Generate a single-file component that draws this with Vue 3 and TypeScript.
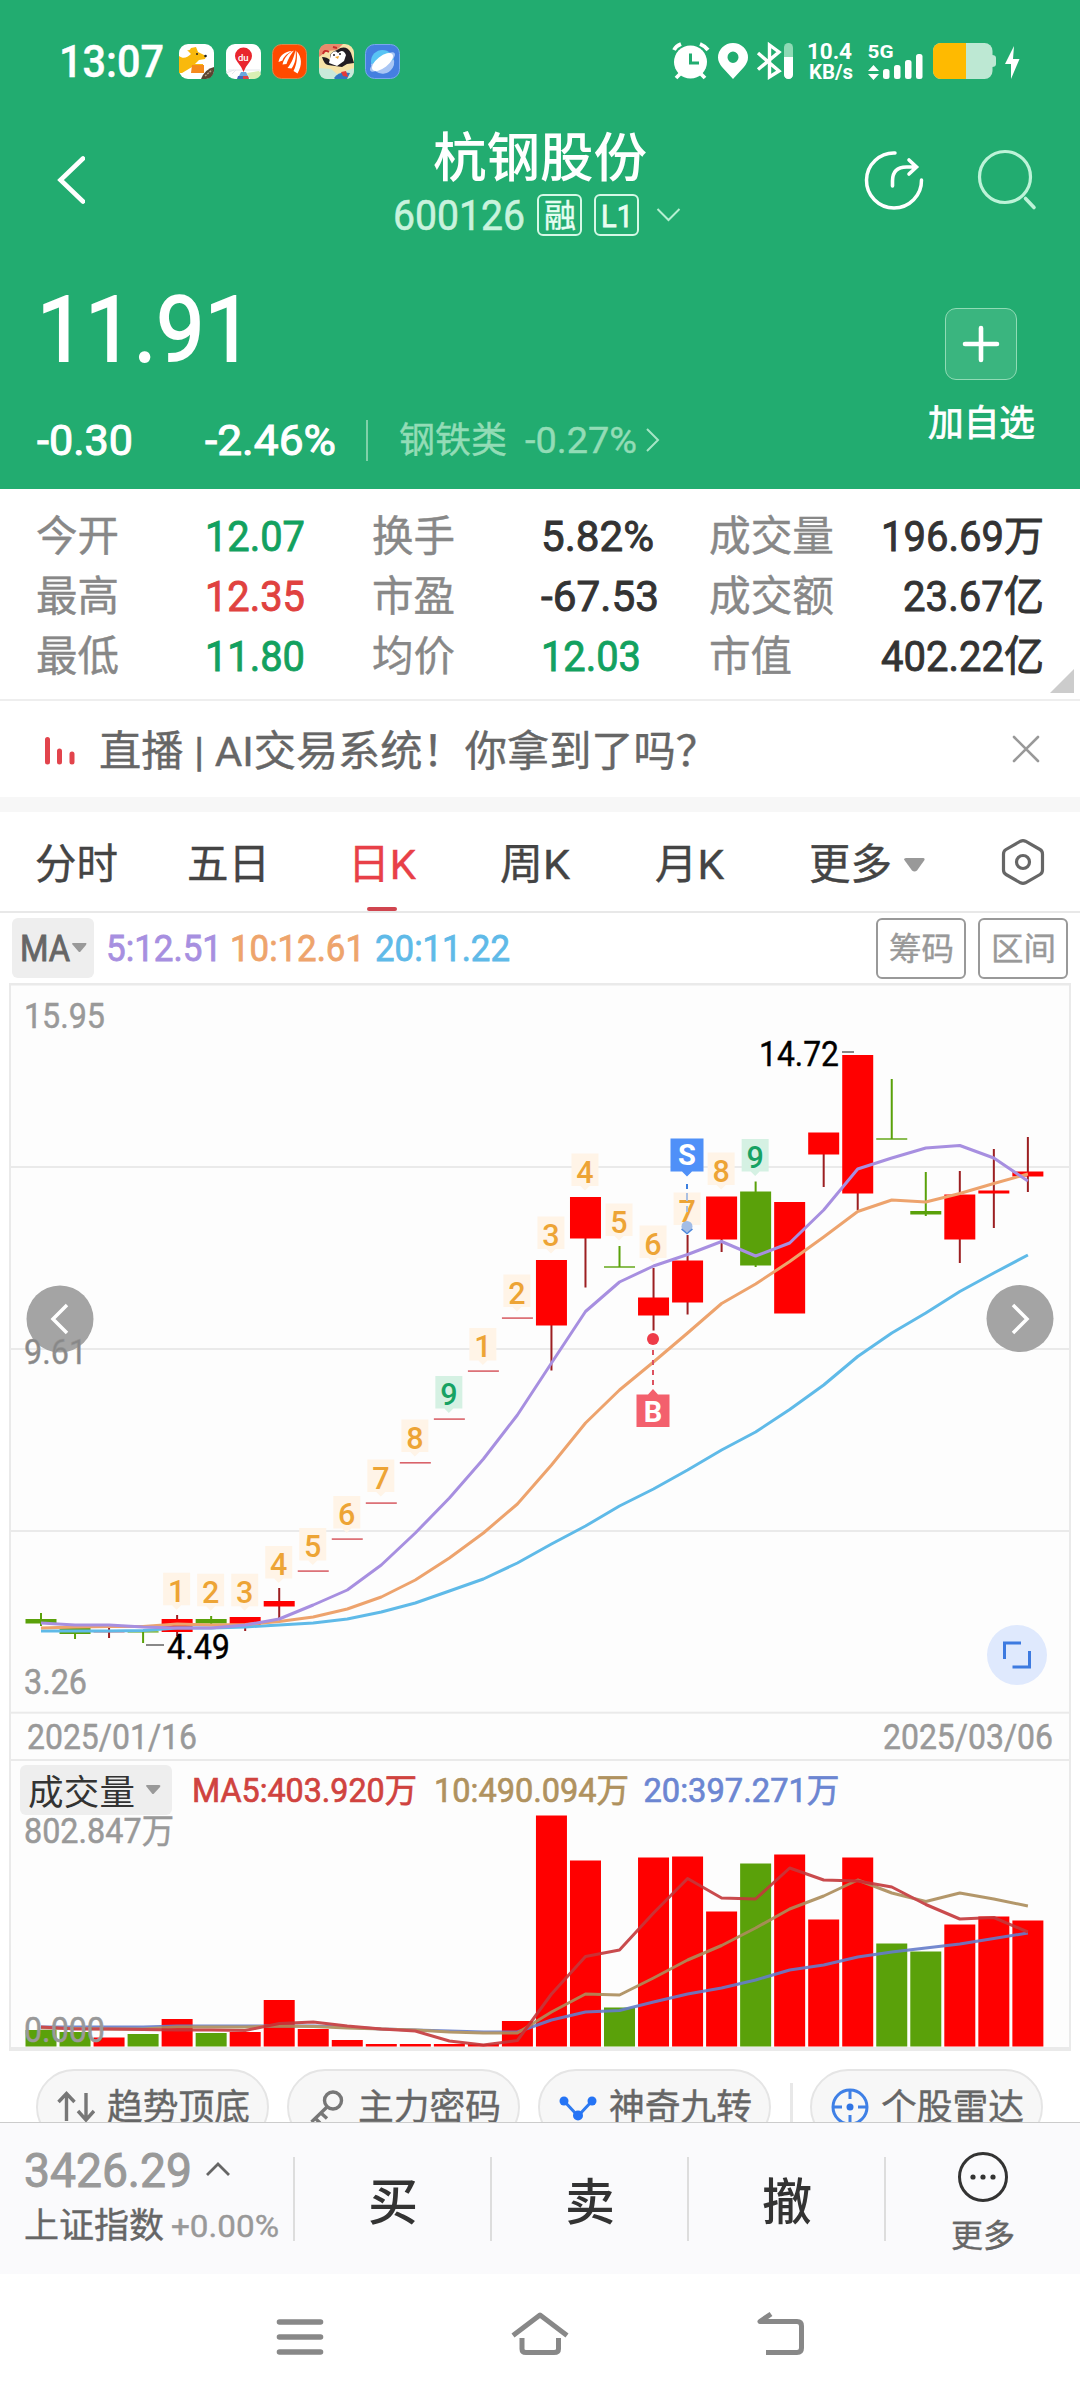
<script setup lang="ts">
import { h, type FunctionalComponent } from 'vue'

/** One line of text set to an exact advance width; its box is the cap height. */
const Fit: FunctionalComponent<{ t: string; w: number; s: number; b?: number; k?: number }> = (p) =>
  h(
    'svg',
    {
      width: p.w,
      height: Math.round(p.s * 0.71),
      style: { display: 'block', overflow: 'visible', flex: 'none' },
    },
    [
      h(
        'text',
        {
          x: 0,
          y: Math.round(p.s * 0.71),
          'font-size': p.s,
          'font-weight': p.b ?? 400,
          textLength: p.w,
          lengthAdjust: 'spacingAndGlyphs',
          fill: 'currentColor',
          stroke: 'currentColor',
          'stroke-width': p.k ?? 0.4,
        },
        p.t,
      ),
    ],
  )
Fit.props = ['t', 'w', 's', 'b', 'k']

interface Quote { label: string; lw: number; value: string; vw: number; tone: string }
const quotes: Quote[][] = [
  [
    { label: '今开', lw: 83, value: '12.07', vw: 100, tone: 'down' },
    { label: '换手', lw: 83, value: '5.82%', vw: 113, tone: '' },
    { label: '成交量', lw: 125, value: '196.69万', vw: 163, tone: '' },
  ],
  [
    { label: '最高', lw: 83, value: '12.35', vw: 100, tone: 'up' },
    { label: '市盈', lw: 83, value: '-67.53', vw: 118, tone: '' },
    { label: '成交额', lw: 125, value: '23.67亿', vw: 141, tone: '' },
  ],
  [
    { label: '最低', lw: 83, value: '11.80', vw: 100, tone: 'down' },
    { label: '均价', lw: 83, value: '12.03', vw: 100, tone: 'down' },
    { label: '市值', lw: 83, value: '402.22亿', vw: 163, tone: '' },
  ],
]

const RED = '#ff0000'
const GREEN = '#5aa10a'
const cx = (i: number) => 41 + 34.03 * i

/** [body top, body bottom, wick top, wick bottom, volume top, falling] */
const candles: [number, number, number, number, number, number][] = [
  [1619, 1623.5, 1613, 1626, 2030, 1],
  [1628, 1634, 1628, 1639, 2032, 1],
  [1631.3, 1632.5, 1627, 1638, 2037.5, 0],
  [1631.3, 1632.5, 1631, 1643, 2034, 1],
  [1619, 1632, 1615, 1636, 2019, 0],
  [1619, 1623.5, 1616, 1624, 2033, 1],
  [1617, 1626.5, 1617, 1631, 2032, 0],
  [1601, 1606.5, 1588, 1619, 2000, 0],
  [1570.3, 1571.9, 1571, 1571, 2029, 0],
  [1538.3, 1539.9, 1539, 1539, 2040, 0],
  [1502.3, 1503.9, 1503, 1503, 2044, 0],
  [1462, 1463.6, 1463, 1463, 2044, 0],
  [1418.3, 1419.9, 1419, 1419, 2044, 0],
  [1370.3, 1371.9, 1371, 1371, 2044, 0],
  [1317.3, 1318.9, 1318, 1318, 2021, 0],
  [1260, 1325.5, 1260, 1370.5, 1815.5, 0],
  [1197, 1238.5, 1197, 1287.5, 1860.5, 0],
  [1266.3, 1267.7, 1246, 1267, 2007.5, 1],
  [1297.5, 1315.5, 1268, 1330.5, 1857.5, 0],
  [1260.5, 1302.5, 1235, 1314.5, 1856.5, 0],
  [1196.5, 1239.5, 1197, 1252, 1911.5, 0],
  [1191.5, 1265.5, 1181.5, 1267, 1863.5, 1],
  [1202, 1313.5, 1202, 1313, 1854.5, 0],
  [1132.5, 1154.5, 1133, 1187, 1919.5, 0],
  [1055, 1193.5, 1055, 1210, 1857.5, 0],
  [1138.3, 1139.7, 1079, 1139, 1943.5, 1],
  [1211, 1214.5, 1172, 1216, 1951.5, 1],
  [1194.5, 1239.5, 1171, 1263, 1924.5, 0],
  [1190.5, 1193.5, 1149, 1228, 1916.5, 0],
  [1171.5, 1176.5, 1137, 1192, 1920.5, 0],
]

const path = (ys: number[]) => ys.map((y, i) => `${cx(i).toFixed(1)},${y}`).join(' ')
const ma5 = path([1623, 1625, 1625, 1627, 1628, 1628, 1625, 1619, 1605, 1590, 1565, 1533, 1498, 1459, 1415, 1363, 1311.5, 1282, 1266, 1254.5, 1241.5, 1256, 1243, 1210, 1169, 1158, 1148, 1145.5, 1158, 1181])
const ma10 = path([1628, 1627, 1626.5, 1626.5, 1624, 1625, 1624.5, 1621.5, 1617, 1609, 1597, 1580, 1558, 1533, 1504, 1465, 1423, 1390, 1362, 1333, 1303.5, 1284, 1261.5, 1237, 1211.5, 1200, 1202, 1193.5, 1183.5, 1174])
const ma20 = path([1631, 1631, 1631, 1630.5, 1628, 1628, 1627, 1625, 1623, 1619, 1612, 1603, 1591, 1579, 1563, 1544, 1526, 1506, 1489, 1470, 1450, 1432, 1409.5, 1385, 1356.5, 1333, 1313, 1291.5, 1273, 1255])
const vma5 = path([2027, 2029, 2029, 2029.5, 2030, 2030, 2030.5, 2023.5, 2022, 2026, 2029, 2031, 2041, 2045, 2040.5, 1994, 1956.5, 1950, 1913, 1878.5, 1898, 1899, 1868, 1880, 1881, 1887, 1904.5, 1919, 1917.5, 1932])
const vma10 = path([2028, 2028.5, 2029, 2029, 2027, 2027, 2027, 2026, 2026.5, 2028, 2029, 2030, 2032, 2033, 2033, 2012, 1994, 1995, 1978, 1960, 1945.5, 1928, 1909, 1896, 1880, 1893, 1901.5, 1893, 1899, 1906])
const vma20 = path([2027, 2027, 2027, 2027, 2026, 2026, 2026, 2026, 2026, 2027, 2029, 2030, 2031, 2032, 2032, 2020, 2012, 2010.5, 2002, 1994, 1988, 1980, 1970, 1965, 1957, 1952, 1948, 1944, 1938.5, 1933])

/** Nine-turn tags: [candle index, count, top edge] */
const tags: [number, string, number][] = [
  [4, '1', 1572.7], [5, '2', 1573.7], [6, '3', 1573.7], [7, '4', 1546], [8, '5', 1528],
  [9, '6', 1496], [10, '7', 1459.5], [11, '8', 1419.5], [12, '9', 1376], [13, '1', 1328],
  [14, '2', 1274.5], [15, '3', 1216.5], [16, '4', 1153.5], [17, '5', 1203.5], [18, '6', 1225.5],
  [19, '7', 1192.5], [20, '8', 1152.5], [21, '9', 1139],
]
const gridLines = [1167, 1349, 1531, 1712.7, 1760]
</script>

<template>
  <div class="page">
    <header class="top">
      <div class="status">
        <Fit class="clock" t="13:07" :w="105" :s="43.500" :b="500" />
        <svg class="app" viewBox="0 0 35 35">
          <rect width="35" height="35" rx="9" fill="#fff" />
          <path d="M0 12C4 15 8 14 12 10L8 6Q11 7 12 4L17 3L19 8L27 12L26 15L20 16L16 20H24V22L13 23L3 29H0Z" fill="#f9b90c" />
          <path d="M13 21H25V29H12Z" fill="#f58a1c" />
          <circle cx="18" cy="10" r="1" fill="#222" /><circle cx="26.500" cy="12" r="1.300" fill="#222" />
          <path d="M22 35Q26 25 35 23V27Q34 34 27 35Z" fill="#5b4431" /><path d="M26 32L33 26" stroke="#b9a08a" stroke-width="1.500" stroke-dasharray="2 1" />
        </svg>
        <svg class="app" viewBox="0 0 35 35">
          <rect width="35" height="35" rx="9" fill="#fff" />
          <path d="M2 26H34M6 30L10 26M0 29L8 26" stroke="#e5e8ec" fill="none" /><path d="M24 35L21 29L33 27L35 30Q33 35 27 35Z" fill="#d9efb4" />
          <path d="M12 34L15 28H20L23 34Z" fill="#6aa8de" /><path d="M11 35L12 32H17V35Z" fill="#4166b8" /><path d="M17 35V32H22L23 35Z" fill="#d44" />
          <path d="M17.500 28Q15 22 11.500 18A8.500 8.500 0 1 1 23.500 18Q20 22 17.500 28Z" fill="#e9262d" />
          <text x="12" y="17" font-size="9.500" font-weight="500" fill="#fff">du</text>
        </svg>
        <svg class="app" viewBox="0 0 35 35">
          <rect x=".5" y=".5" width="34" height="34" rx="9" fill="#ff4a00" stroke="#d58a4e" />
          <path d="M6.500 18C7.500 11.500 13 7.500 20 7C14 10.500 11.500 13 10.500 16.500ZM10.500 20.500C12.500 13 16.500 9 22 6.500C18 11.500 16.500 14.500 14.500 20ZM15.500 24C20 18.500 22 13 23.500 6C24.500 13 23.500 19 19.500 24.500ZM21.500 27C25 20 25.500 13 24.500 7C30 13 30.500 21 25.500 29.500Z" fill="#fff" />
        </svg>
        <svg class="app" viewBox="0 0 35 35">
          <rect width="35" height="35" rx="9" fill="#f6e3a8" />
          <path d="M0 9Q0 0 9 0H24L18 6L8 7L0 13Z" fill="#e98a6c" /><path d="M4 10Q5 5 10 8M14 3L18 4" stroke="#c92d2b" stroke-width="2" fill="none" />
          <path d="M3 13Q8 13 11 16Q10 8 18 6Q27 0 32 9L35 19L28 20L23 23L9 21Q5 20 3 13Z" fill="#211d22" />
          <path d="M12 10Q16 5 19 9Q24 4 27 11L25 17L18 22L10 19Z" fill="#fff" />
          <circle cx="15" cy="11" r="1" fill="#222" /><circle cx="21" cy="10" r="1" fill="#222" /><path d="M16 13L20 12L19 15Z" fill="#f0a426" />
          <path d="M0 24L12 25L18 30L35 24V26Q35 35 26 35H9Q0 35 0 26Z" fill="#c9e9da" /><path d="M15 34Q20 27 31 29L28 35H16Z" fill="#3077c1" /><path d="M22 28L27 27L29 33L24 32Z" fill="#e33a3a" />
        </svg>
        <svg class="app" viewBox="0 0 35 35">
          <rect x=".5" y=".5" width="34" height="34" rx="9" fill="#447fe0" stroke="#79a7ee" />
          <circle cx="17.500" cy="17.500" r="11.500" fill="#59c4f4" /><path d="M6 20A11.500 11.500 0 0 0 29 16Z" fill="#a9c6f4" />
          <ellipse cx="17.500" cy="18" rx="15" ry="5" transform="rotate(-36 17.500 18)" fill="#a9c6f4" />
          <ellipse cx="17.500" cy="18" rx="12.500" ry="5.800" transform="rotate(-38 17.500 18)" fill="#fff" />
        </svg>
        <svg class="sys" width="350" height="40" viewBox="671 41 350 40" fill="#fff">
          <circle cx="690.500" cy="62" r="16.500" />
          <path d="M674 50Q676 46 681 44M700 44Q705 46 708 50M681 73L676 78M700 73L705 78" stroke="#fff" stroke-width="3.800" fill="none" />
          <path d="M690.500 53.500V63H699" stroke="#22ac70" stroke-width="3" fill="none" />
          <path fill-rule="evenodd" d="M733 79L722 67Q718 62 718 57.500A15 14.500 0 0 1 748 57.500Q748 62 744 67ZM733 51.500A5.500 5.700 0 1 0 733 62.900A5.500 5.700 0 0 0 733 51.500Z" />
          <path d="M758 53L779 71L769.500 77V45L779 52L758 69.500" fill="none" stroke="#fff" stroke-width="3.400" />
          <rect x="784" y="43" width="9" height="36" rx="4.500" fill="#8fdab5" /><path d="M784 57H793V74.500A4.500 4.500 0 0 1 784 74.500Z" />
          <text x="807" y="59" font-size="22.500" font-weight="700" textLength="45">10.4</text>
          <text x="809" y="78.500" font-size="19.500" font-weight="700" textLength="44" lengthAdjust="spacingAndGlyphs">KB/s</text>
          <text x="867.500" y="57.500" font-size="18.500" font-weight="700" textLength="26" lengthAdjust="spacingAndGlyphs">5G</text>
          <path d="M868 71L873.500 65L879 71ZM868 74L873.500 80L879 74Z" />
          <rect x="883" y="69" width="6.500" height="10" rx="2.500" /><rect x="894" y="65" width="6.500" height="14" rx="2.500" />
          <rect x="905" y="60" width="6.500" height="19" rx="2.500" /><rect x="916" y="54" width="6.500" height="25" rx="2.500" />
          <rect x="933" y="43" width="59.500" height="36" rx="8" fill="#bde8d3" /><path d="M992 55Q996 55 996 58V64Q996 67 992 67Z" fill="#bde8d3" />
          <path d="M966 43H941A8 8 0 0 0 933 51V71A8 8 0 0 0 941 79H966Z" fill="#ffba00" />
          <path d="M1014 46L1005 64H1011L1011 79L1019.500 59H1013Z" />
        </svg>
      </div>

      <div class="nav">
        <svg class="back" width="28" height="50" viewBox="57 155 28 50"><path d="M83 158.500L60.500 180L83 201.500" fill="none" stroke="#fff" stroke-width="4.600" stroke-linecap="round" /></svg>
        <div class="title">
          <Fit class="name" t="杭钢股份" :w="214" :s="53" :b="500" :k="0" />
          <div class="code">
            <Fit t="600126" :w="132" :s="42.500" :k="0.6" />
            <span class="badge b1"><Fit t="融" :w="32" :s="32" /></span>
            <span class="badge b2"><Fit t="L1" :w="32" :s="32" :k="0.8" /></span>
            <svg class="chev" width="25" height="14" viewBox="0 0 25 14"><path d="M1.500 1L12.500 12L23.500 1" fill="none" stroke="#b5f0d2" stroke-width="2" /></svg>
          </div>
        </div>
        <svg class="acts" width="174" height="64" viewBox="863 148 174 64" fill="none" stroke-linecap="round">
          <path d="M895 153A27.500 27.500 0 1 0 921.500 180" stroke="#fff" stroke-width="3.500" />
          <path d="M892.500 186V181Q892.500 167 906.500 167H916M909 160L916.500 167L909 174" stroke="#fff" stroke-width="3.600" />
          <circle cx="1005" cy="177" r="25.500" stroke="#bdf3d8" stroke-width="3.200" /><path d="M1025.500 198.500L1034 207.500" stroke="#bdf3d8" stroke-width="3.600" />
        </svg>
      </div>

      <div class="pricing">
        <div class="left">
          <Fit t="11.91" :w="216" :s="90" :k="1.8" />
          <div class="change">
            <Fit t="-0.30" :w="96" :s="42.500" :k="1" />
            <Fit class="pct" t="-2.46%" :w="131" :s="42.500" :k="1" />
            <i class="bar" />
            <Fit class="sector" t="钢铁类" :w="108" :s="36" />
            <Fit class="sector2" t="-0.27%" :w="112" :s="37" />
            <svg class="go" width="14" height="24" viewBox="0 0 14 24"><path d="M1 1L12 12L1 23" fill="none" stroke="#a5e6c6" stroke-width="2" /></svg>
          </div>
        </div>
        <div class="fav">
          <span class="plus"><svg width="38" height="38"><path d="M19 3V35M3 19H35" stroke="#fff" stroke-width="4.600" stroke-linecap="round" /></svg></span>
          <Fit t="加自选" :w="107" :s="36" :k="0.8" />
        </div>
      </div>
    </header>

    <section class="quotes">
      <div v-for="(row, r) in quotes" :key="r" class="row">
        <div v-for="(q, c) in row" :key="q.label" :class="['cell', { last: c === 2 }]">
          <Fit class="label" :t="q.label" :w="q.lw" :s="41.500" />
          <Fit :class="['value', q.tone]" :t="q.value" :w="q.vw" :s="42" :k="0.9" />
        </div>
      </div>
      <i class="corner" />
    </section>

    <section class="live">
      <svg class="live-icon" width="30" height="28" viewBox="0 0 30 28"><path d="M2.500 2.500V25M14.500 14V25M27 17V25" stroke="#e2444c" stroke-width="5" stroke-linecap="round" /></svg>
      <Fit class="live-text" t="直播 | AI交易系统！你拿到了吗？" :w="619" :s="41.500" />
      <svg class="close" width="28" height="28"><path d="M2 2L26 26M26 2L2 26" stroke="#999" stroke-width="2.600" stroke-linecap="round" /></svg>
    </section>

    <nav class="tabs">
      <span class="tab"><Fit t="分时" :w="83" :s="41.500" /></span>
      <span class="tab"><Fit t="五日" :w="83" :s="41.500" /></span>
      <span class="tab on"><Fit t="日K" :w="68" :s="41.500" /></span>
      <span class="tab"><Fit t="周K" :w="70" :s="41.500" /></span>
      <span class="tab"><Fit t="月K" :w="69" :s="41.500" /></span>
      <span class="tab more"><Fit t="更多" :w="83" :s="41.500" />
        <svg width="21" height="14"><path d="M0 1.500Q0 0 2 0H19Q21 0 20.500 2L13 12.500Q10.500 14.500 8 12.500Z" fill="#999" /></svg></span>
      <svg class="gear" width="44" height="50" viewBox="1001 837 44 50" fill="none" stroke="#666" stroke-width="3.200">
        <path d="M1020.500 841.200Q1023 840 1025.500 841.200L1040 849.500Q1042.500 851 1042.500 854V870Q1042.500 873 1040 874.500L1025.500 882.800Q1023 884 1020.500 882.800L1006 874.500Q1003.500 873 1003.500 870V854Q1003.500 851 1006 849.500Z" />
        <circle cx="1023" cy="862" r="6.500" />
      </svg>
    </nav>

    <section class="mas">
      <span class="sel"><Fit t="MA" :w="50" :s="36" :k="0.9" />
        <svg width="15" height="10"><path d="M0 1Q0 0 1 0H14Q15 0 14 2L8.500 8.500Q7.500 9.500 6.500 8.500Z" fill="#999" /></svg></span>
      <Fit class="m5" t="5:12.51" :w="116" :s="36" :k="0.8" />
      <Fit class="m10" t="10:12.61" :w="135" :s="36" :k="0.8" />
      <Fit class="m20" t="20:11.22" :w="135" :s="36" :k="0.8" />
      <span class="btn"><Fit t="筹码" :w="65" :s="32" /></span>
      <span class="btn"><Fit t="区间" :w="65" :s="32" /></span>
    </section>

    <svg class="chart" width="1080" height="1069" viewBox="0 983 1080 1069">
      <rect x="10" y="984.500" width="1060" height="1065" fill="#fdfdfd" />
      <g fill="#eaeaea">
        <rect x="9" y="983" width="1062" height="2.500" /><rect x="9" y="983" width="2" height="1067" />
        <rect x="1069" y="983" width="2" height="1067" /><rect x="9" y="2047" width="1062" height="4" />
        <rect v-for="y in gridLines" :key="y" x="10" :y="y - 1" width="1060" height="2" />
      </g>

      <template v-for="(c, i) in candles" :key="i">
        <rect v-if="c[3] > c[2]" :x="cx(i) - 1" :y="c[2]" width="2" :height="c[3] - c[2]" :fill="c[5] ? GREEN : '#9c1f22'" />
        <rect :x="cx(i) - 15.500" :y="c[0]" width="31" :height="c[1] - c[0]" :fill="c[5] ? GREEN : c[1] - c[0] < 2 ? '#d9636a' : RED" />
        <rect :x="cx(i) - 15.500" :y="c[4]" width="31" :height="2046.500 - c[4]" :fill="c[5] ? GREEN : RED" />
      </template>

      <g fill="none" stroke-width="3" stroke-linejoin="round">
        <polyline :points="ma20" stroke="#5fbae8" /><polyline :points="ma10" stroke="#eda36d" /><polyline :points="ma5" stroke="#a78fe0" />
        <g opacity=".9"><polyline :points="vma20" stroke="#667dcb" /><polyline :points="vma10" stroke="#ac8d5b" /><polyline :points="vma5" stroke="#c4383b" /></g>
      </g>

      <g v-for="t in tags" :key="t[0]">
        <path :transform="`translate(${cx(t[0]) - 0.5} ${t[2]})`" d="M-13.500 0H13.500V32.500H4.500L0 37L-4.500 32.500H-13.500Z" :fill="t[1] === '9' ? '#d5f1e3' : '#fff4e7'" />
        <text :x="cx(t[0]) - 0.5" :y="t[2] + 29" text-anchor="middle" font-size="30.500" font-weight="500" :fill="t[1] === '9' ? '#17a263' : '#eda435'">{{ t[1] }}</text>
      </g>

      <path d="M670.500 1138.500H703.500V1171.500H692L687 1176.500L682 1171.500H670.500Z" fill="#4f90f8" />
      <text x="687" y="1165" text-anchor="middle" font-size="29" font-weight="700" fill="#fff">S</text>
      <path d="M687 1184V1189" stroke="#3c7fdf" stroke-width="2" /><path d="M687 1193V1201M687 1206V1212" stroke="#a9bfe2" stroke-width="2" />
      <circle cx="687" cy="1226.500" r="5.500" fill="#a3bde6" /><path d="M681.500 1229L687 1233.500L692.500 1229" fill="none" stroke="#4b87dc" stroke-width="1.500" />
      <path d="M636.500 1394.500H648L653 1389L658 1394.500H669.500V1427H636.500Z" fill="#f3606d" />
      <text x="653" y="1421.500" text-anchor="middle" font-size="29" font-weight="700" fill="#fff">B</text>
      <circle cx="653" cy="1339" r="6" fill="#ee3b48" /><path d="M653 1350V1386" stroke="#dc5260" stroke-width="2" stroke-dasharray="5 5" />

      <path d="M146 1645H164" stroke="#888" stroke-width="2" /><path d="M842 1052H854" stroke="#888" stroke-width="2" />
      <g fill="#000" stroke="#000" stroke-width=".4" font-size="34.500">
        <text x="167" y="1658.500" textLength="63" lengthAdjust="spacingAndGlyphs">4.49</text>
        <text x="759" y="1066" textLength="80" lengthAdjust="spacingAndGlyphs">14.72</text>
      </g>

      <circle cx="60" cy="1319" r="33.500" fill="#a4a4a4" /><path d="M67 1305L53 1319L67 1333" fill="none" stroke="#fff" stroke-width="3.500" />
      <circle cx="1020" cy="1318.500" r="33.500" fill="#a4a4a4" /><path d="M1013 1305L1027 1319L1013 1333" fill="none" stroke="#fff" stroke-width="3.500" />
      <circle cx="1017" cy="1655" r="30" fill="#dfe9fd" /><path d="M1004.500 1659V1643H1021M1029.500 1651V1667H1012.500" fill="none" stroke="#3d7ae0" stroke-width="3" />

      <g fill="#999" stroke="#999" stroke-width=".5" font-size="34.500">
        <text x="24" y="1028" textLength="81" lengthAdjust="spacingAndGlyphs">15.95</text>
        <text x="24" y="1364" textLength="63" lengthAdjust="spacingAndGlyphs" fill="#888">9.61</text>
        <text x="24" y="1693.500" textLength="63" lengthAdjust="spacingAndGlyphs">3.26</text>
        <text x="27" y="1749" textLength="170" lengthAdjust="spacingAndGlyphs">2025/01/16</text>
        <text x="883" y="1749" textLength="170" lengthAdjust="spacingAndGlyphs">2025/03/06</text>
        <text x="24" y="1842.500" textLength="150" lengthAdjust="spacingAndGlyphs">802.847万</text>
        <text x="24" y="2041.500" textLength="81" lengthAdjust="spacingAndGlyphs">0.000</text>
      </g>

      <rect x="20" y="1765" width="152" height="50" rx="6" fill="#eee" />
      <text x="28" y="1804.500" font-size="35.500" textLength="107" fill="#333">成交量</text>
      <path d="M146 1786Q146 1785 147 1785H159Q161 1785 160 1787L154 1793.500Q153 1794.500 152 1793.500Z" fill="#999" />
      <g font-size="33.500" stroke-width=".7">
        <text x="192" y="1802" textLength="225" lengthAdjust="spacingAndGlyphs" fill="#d0433f" stroke="#d0433f">MA5:403.920万</text>
        <text x="434" y="1802" textLength="195" lengthAdjust="spacingAndGlyphs" fill="#b0925f" stroke="#b0925f">10:490.094万</text>
        <text x="643.500" y="1802" textLength="196" lengthAdjust="spacingAndGlyphs" fill="#6c86d2" stroke="#6c86d2">20:397.271万</text>
      </g>
    </svg>

    <section class="pills">
      <span class="pill">
        <svg class="pi" width="38" height="34" viewBox="57 2089 38 34"><path d="M66.500 2120V2093M58.500 2101L66.500 2092.500L74.500 2101M86 2092V2119M78 2110L86 2119L94 2110" fill="none" stroke="#777" stroke-width="3.400" /></svg>
        <Fit t="趋势顶底" :w="143" :s="36" />
      </span>
      <span class="pill">
        <svg class="pi" width="38" height="36" viewBox="310 2087 38 36"><g fill="none" stroke="#777" stroke-width="3.400"><circle cx="335" cy="2098.500" r="8.500" /><path d="M329 2105L313.500 2120M323 2111L329 2116.500M317 2116L322 2121" /></g></svg>
        <Fit t="主力密码" :w="143" :s="36" />
      </span>
      <span class="pill">
        <svg class="pi" width="38" height="36" viewBox="559 2087 38 36"><path d="M564 2099L578 2114L592 2099" fill="none" stroke="#2f7bf0" stroke-width="3" /><g fill="#2574f5"><circle cx="564" cy="2099" r="4.500" /><circle cx="592" cy="2099" r="4.500" /><circle cx="578" cy="2113.500" r="5" /></g></svg>
        <Fit t="神奇九转" :w="143" :s="36" />
      </span>
      <i class="split" />
      <span class="pill">
        <svg class="pi" width="38" height="38" viewBox="831 2088 38 38"><g fill="none" stroke="#3f80e6" stroke-width="3"><circle cx="850" cy="2107" r="17" /><path d="M850 2090V2099M850 2115V2124M833 2107H842M858 2107H867" /></g><circle cx="850" cy="2107" r="3.500" fill="#2f74e4" /></svg>
        <Fit t="个股雷达" :w="143" :s="36" />
      </span>
    </section>

    <footer class="trade">
      <div class="index">
        <div class="line1"><Fit t="3426.29" :w="168" :s="49" :k="1" /><svg width="26" height="15"><path d="M2 13L13 2L24 13" fill="none" stroke="#666" stroke-width="2.800" /></svg></div>
        <div class="line2"><Fit t="上证指数" :w="140" :s="35" /><Fit class="chg" t="+0.00%" :w="108" :s="31.500" /></div>
      </div>
      <div class="act"><Fit t="买" :w="50" :s="50" :b="500" :k="0" /></div>
      <div class="act"><Fit t="卖" :w="50" :s="50" :b="500" :k="0" /></div>
      <div class="act"><Fit t="撤" :w="50" :s="50" :b="500" :k="0" /></div>
      <div class="act etc">
        <svg class="dots" width="52" height="52"><circle cx="26" cy="26" r="23.500" fill="none" stroke="#333" stroke-width="3" /><g fill="#333"><circle cx="16" cy="26" r="2.600" /><circle cx="26" cy="26" r="2.600" /><circle cx="36" cy="26" r="2.600" /></g></svg>
        <Fit t="更多" :w="64" :s="32" />
      </div>
    </footer>

    <div class="sysnav">
      <svg width="1080" height="60" viewBox="0 2305 1080 60" fill="none" stroke="#888" stroke-width="5" stroke-linejoin="round">
        <path d="M279.500 2322H320.500M279.500 2337H320.500M279.500 2352H320.500" stroke-width="5.600" stroke-linecap="round" />
        <path d="M513 2335.500L540 2315L567 2335.500M522 2338V2349Q522 2352.500 526 2352.500H554Q558.500 2352.500 558.500 2349V2338" />
        <path d="M771 2314L760 2321.500H797Q801.500 2321.500 801.500 2326V2348Q801.500 2352.500 797 2352.500H766" />
      </svg>
    </div>
  </div>
</template>

<style>
body { margin: 0; background: #fff; }
</style>

<style scoped>
.page { width: 1080px; height: 2400px; overflow: hidden; display: flex; flex-direction: column; background: #fff; font-family: Roboto, "Noto Sans CJK SC", sans-serif; }
.page > * { flex: none; box-sizing: border-box; }
.top { height: 489px; background: #22ac70; color: #fff; overflow: hidden; }
.status { display: flex; align-items: center; height: 122px; padding-left: 59px; }
.app { width: 35px; height: 35px; margin-right: 11.600px; flex: none; }
.clock { margin-right: 15px; }
.sys { margin-left: 258.800px; flex: none; overflow: visible; }
.nav { display: flex; height: 123px; align-items: flex-start; }
.back { margin: 33px 0 0 57px; flex: none; }
.title { width: 780px; padding-top: 17px; }
.name { margin: 0 0 0 348px; }
.code { display: flex; align-items: center; height: 42px; margin: 17px 0 0 308px; color: #c8f3dd; }
.badge { display: flex; align-items: center; justify-content: center; width: 45px; height: 42px; box-sizing: border-box; border: 2px solid #d5f8e6; border-radius: 6px; color: #e6fdf1; }
.b1 { margin-left: 12px; }
.b2 { margin-left: 12px; }
.chev { margin-left: 17px; }
.acts { margin-top: 26px; margin-left: -2px; flex: none; }
.pricing { display: flex; height: 244px; }
.left { width: 926px; padding: 52px 0 0 37px; box-sizing: border-box; }
.change { display: flex; align-items: center; height: 42px; margin-top: 58px; }
.pct { margin-left: 72px; }
.bar { width: 2px; height: 41px; background: #7fd1a9; margin-left: 30px; }
.sector { margin-left: 31px; color: #93dcb6; }
.sector2 { margin-left: 18px; color: #93dcb6; }
.go { margin-left: 9px; }
.fav { width: 110px; display: flex; flex-direction: column; align-items: center; padding-top: 63px; }
.plus { display: flex; align-items: center; justify-content: center; width: 72px; height: 72px; box-sizing: border-box; border: 1.500px solid #90dbb5; border-radius: 11px; background: #3ab57f; margin-bottom: 30px; }
.quotes { position: relative; height: 212px; padding: 17px 36px 0 36px; border-bottom: 2px solid #eee; }
.row { display: flex; height: 60px; }
.cell { display: flex; align-items: center; width: 336px; }
.cell.last { flex: 1; justify-content: space-between; padding-left: 1px; }
.cell:not(.last) .value { margin-left: 86px; }
.label { color: #888; }
.value { color: #333; }
.up { color: #e0423f; }
.down { color: #13a15f; }
.corner { position: absolute; right: 6px; bottom: 6px; border-left: 24px solid transparent; border-bottom: 24px solid #ccc; }
.live { display: flex; align-items: center; height: 111px; border-bottom: 15px solid #f7f7f7; padding: 5px 40px 0 45px; }
.live-icon { margin-top: -2px; }
.live-text { margin-left: 24px; margin-right: auto; color: #666; }
.close { margin-top: -6px; }
.tabs { display: flex; align-items: center; height: 101px; border-bottom: 2px solid #e8e8e8; padding: 3px 35px 0 35px; color: #444; }
.tab { display: flex; align-items: center; height: 96px; box-sizing: border-box; padding-top: 3px; }
.tab + .tab { margin-left: 69px; }
.tab.on { position: relative; color: #e84048; margin-left: 78px; }
.tab.on + .tab { margin-left: 84px; }
.tab.on + .tab + .tab { margin-left: 85px; }
.tab.on::after { content: ""; position: absolute; left: 19px; bottom: 0; width: 30px; height: 4px; border-radius: 2px; background: #d0454f; }
.tab.more { margin-left: 85px; gap: 12px; }
.gear { margin-left: auto; margin-top: -3px; }
.mas { display: flex; align-items: center; height: 70px; padding: 0 12px; }
.sel { display: flex; align-items: center; justify-content: center; gap: 2px; width: 82px; height: 60px; border-radius: 6px; background: #eee; color: #666; box-sizing: border-box; padding-left: 0; }
.m5 { margin-left: 12px; color: #a78fe0; }
.m10 { margin-left: 8px; color: #eea46c; }
.m20 { margin-left: 10px; margin-right: auto; color: #5fbae8; }
.btn { display: flex; align-items: center; justify-content: center; width: 90px; height: 61px; box-sizing: border-box; border: 2px solid #999; border-radius: 6px; color: #999; margin-left: 12px; padding-top: 1px; }
.chart { display: block; height: 1069px; }
.pills { display: flex; align-items: flex-start; height: 70px; overflow: hidden; padding: 17px 0 0 36px; }
.pill { display: flex; align-items: center; flex: none; width: 233px; height: 76px; box-sizing: border-box; border: 2px solid #e5e5e5; border-radius: 38px; background: #f7f7f7; margin-right: 18px; padding-left: 19px; color: #666; }
.pi { flex: none; margin-right: 12px; }
.split { width: 3px; height: 60px; background: #e8e8e8; margin: 14px 17px 0 1px; }
.trade { display: flex; align-items: center; height: 152px; background: #fafafc; border-top: 1.500px solid #ccc; }
.index { width: 293px; padding: 0 0 7px 24px; box-sizing: border-box; }
.line1 { display: flex; align-items: center; gap: 13px; color: #999; }
.line2 { display: flex; align-items: center; margin-top: 26px; color: #666; }
.chg { margin-left: 7px; color: #999; }
.act { width: 197px; height: 84px; border-left: 2px solid #ddd; box-sizing: border-box; display: flex; align-items: center; justify-content: center; color: #333; padding-top: 6px; }
.etc { flex-direction: column; gap: 21px; width: 196px; color: #666; padding-top: 0; }
.dots { flex: none; }
.sysnav { padding-top: 31px; }
</style>
